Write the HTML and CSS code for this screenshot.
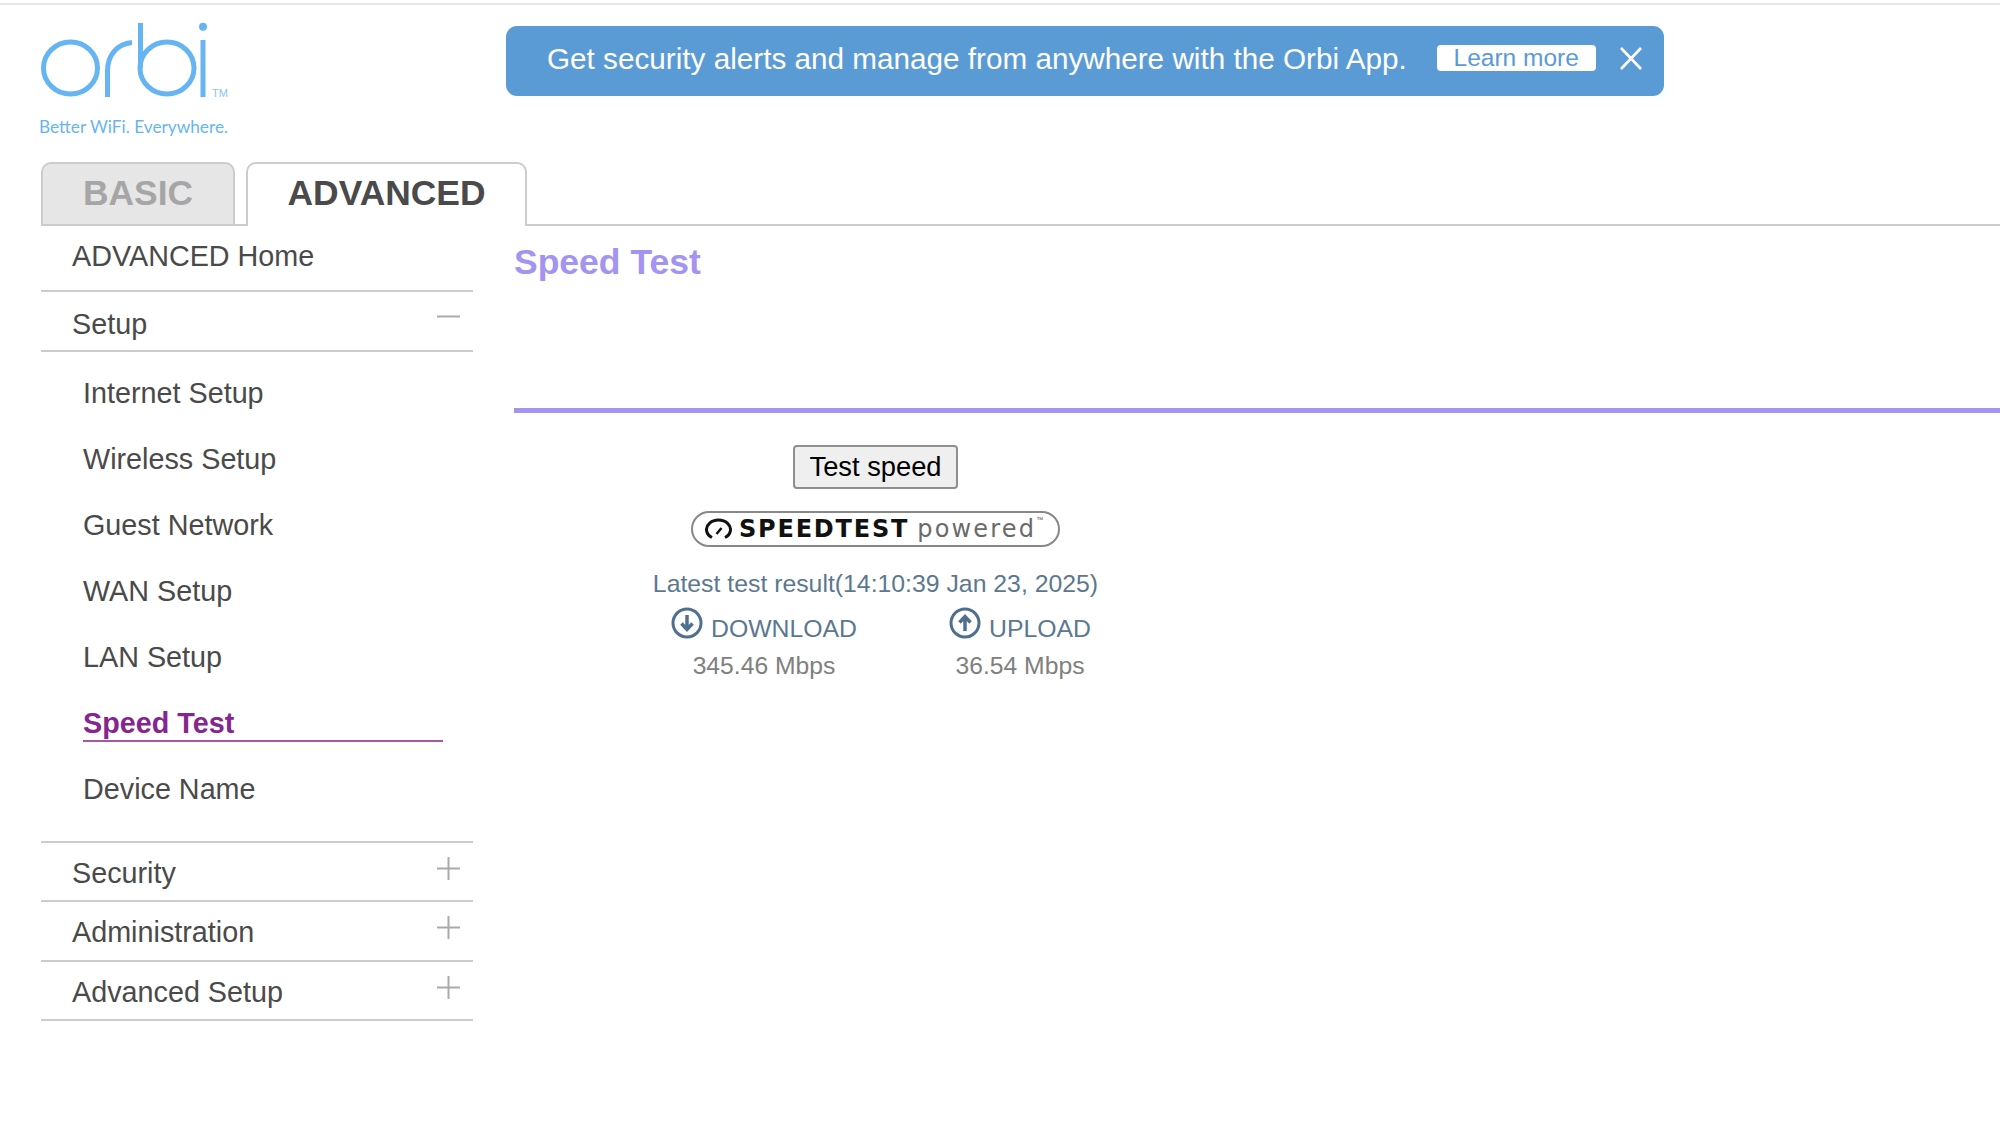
FILE: index.html
```html
<!DOCTYPE html>
<html lang="en">
<head>
<meta charset="utf-8">
<title>Orbi Speed Test</title>
<link rel="stylesheet" href="styles.css">
</head>
<body>
<div class="top-rule"></div>
<header class="header">
  <div class="brand">
    <svg class="logo" width="200" height="90" viewBox="0 0 200 90" aria-label="orbi logo">
      <g fill="none" stroke="#66b5f2" stroke-width="5">
        <ellipse cx="31.500" cy="51" rx="27" ry="26"/>
        <path d="M68.500 80V54C68.500 38 78 27 93 25.500"/>
        <ellipse cx="128" cy="51" rx="27" ry="26"/>
        <path d="M101.500 6V51"/>
        <path d="M164 23V80"/>
      </g>
      <circle cx="164" cy="9.700" r="4" fill="#66b5f2"/>
      <text class="logo-tm" x="173" y="80">TM</text>
    </svg>
    <div class="tagline">Better WiFi. Everywhere.</div>
  </div>
  <div class="banner">
    <span class="banner-text">Get security alerts and manage from anywhere with the Orbi App.</span>
    <a class="learn">Learn more</a>
    <svg class="banner-close" width="22" height="23" viewBox="0 0 22 23"><path d="M1 1L21 22M21 1L1 22" stroke="#fff" stroke-width="2.600" fill="none"/></svg>
  </div>
</header>
<nav class="tabs">
  <a class="tab tab-basic">BASIC</a>
  <a class="tab tab-advanced">ADVANCED</a>
</nav>
<div class="main">
  <aside class="sidebar">
    <div class="row row-home"><span class="row-label">ADVANCED Home</span></div>
    <div class="row row-setup"><span class="row-label">Setup</span>
      <svg class="toggle toggle-minus" width="23" height="23" viewBox="0 0 23 23"><path d="M0 11.500H23" stroke="#aaa" stroke-width="2"/></svg>
    </div>
    <ul class="submenu">
      <li><a>Internet Setup</a></li>
      <li><a>Wireless Setup</a></li>
      <li><a>Guest Network</a></li>
      <li><a>WAN Setup</a></li>
      <li><a>LAN Setup</a></li>
      <li><a class="active">Speed Test</a></li>
      <li><a>Device Name</a></li>
    </ul>
    <div class="row"><span class="row-label">Security</span>
      <svg class="toggle" width="23" height="23" viewBox="0 0 23 23"><path d="M0 11.500H23M11.500 0V23" stroke="#aaa" stroke-width="2"/></svg>
    </div>
    <div class="row"><span class="row-label">Administration</span>
      <svg class="toggle" width="23" height="23" viewBox="0 0 23 23"><path d="M0 11.500H23M11.500 0V23" stroke="#aaa" stroke-width="2"/></svg>
    </div>
    <div class="row"><span class="row-label">Advanced Setup</span>
      <svg class="toggle" width="23" height="23" viewBox="0 0 23 23"><path d="M0 11.500H23M11.500 0V23" stroke="#aaa" stroke-width="2"/></svg>
    </div>
  </aside>
  <main class="content">
    <h1 class="title">Speed Test</h1>
    <div class="panel">
      <button class="test-btn" type="button">Test speed</button>
      <div class="speedtest-badge">
        <svg width="27" height="24" viewBox="0 0 27 24"><path d="M7 20.500A12 9.500 0 1 1 20 20.500" fill="none" stroke="#111" stroke-width="3"/><path d="M11.500 17L16.500 11" stroke="#111" stroke-width="2.500"/></svg>
        <span class="st-name">SPEEDTEST</span>
        <span class="st-powered">powered</span><span class="st-tm">™</span>
      </div>
      <div class="latest">Latest test result(14:10:39 Jan 23, 2025)</div>
      <div class="results">
        <div class="result">
          <div class="result-head">
            <svg class="dir-icon" width="32" height="32" viewBox="0 0 32 32"><circle cx="16" cy="16" r="14" fill="none" stroke="#4f6f8f" stroke-width="3"/><path d="M16 8V22M10.500 16.500L16 22.500L21.500 16.500" fill="none" stroke="#4f6f8f" stroke-width="3.500"/></svg>
            <span>DOWNLOAD</span>
          </div>
          <div class="result-value">345.46 Mbps</div>
        </div>
        <div class="result">
          <div class="result-head">
            <svg class="dir-icon" width="32" height="32" viewBox="0 0 32 32"><circle cx="16" cy="16" r="14" fill="none" stroke="#4f6f8f" stroke-width="3"/><path d="M16 24V10M10.500 15.500L16 9.500L21.500 15.500" fill="none" stroke="#4f6f8f" stroke-width="3.500"/></svg>
            <span>UPLOAD</span>
          </div>
          <div class="result-value">36.54 Mbps</div>
        </div>
      </div>
    </div>
  </main>
</div>
</body>
</html>
```
FILE: styles.css
```css
* { box-sizing: border-box; }
html, body { margin: 0; padding: 0; background: #fff; }
body { width: 2000px; height: 1125px; overflow: hidden; font-family: "Liberation Sans", Arial, sans-serif; color: #4a4a4a; }
.top-rule { height: 5px; border-bottom: 2px solid #e6e6e6; }

.header { display: flex; height: 157px; padding-left: 39px; }
.brand { width: 467px; padding-top: 12px; }
.logo { display: block; }
.logo-tm { font-family: "Liberation Sans", sans-serif; font-size: 11px; fill: #8cc4ef; }
.tagline { margin-top: 9px; font-family: "Lato", sans-serif; font-size: 17.250px; line-height: 22px; color: #66b5f2; }

.banner { display: flex; align-items: center; width: 1158px; height: 70px; margin-top: 21px; padding: 0 0 4px 41px; background: #5b9bd5; border-radius: 11px; color: #fff; }
.banner-text { font-size: 29.700px; line-height: 40px; white-space: nowrap; }
.learn { display: block; width: 159px; height: 26px; margin: -2px 0 0 30px; background: #fff; border-radius: 4px; color: #5b9bd5; font-size: 24.500px; line-height: 25px; text-align: center; }
.banner-close { margin: -2px 0 0 24px; }

.tabs { display: flex; gap: 11px; height: 64px; margin-left: 41px; border-bottom: 2px solid #ccc; }
.tab { display: block; height: 64px; border: 2px solid #ccc; border-radius: 10px 10px 0 0; font-size: 35.400px; font-weight: 700; line-height: 58px; text-align: center; }
.tab-basic { width: 194px; background: #e6e6e6; color: #a6a6a6; }
.tab-advanced { width: 281px; background: #fff; border-bottom: 0; color: #4a4a4a; }

.main { display: flex; }
.sidebar { width: 432px; margin-left: 41px; font-size: 28.750px; }
.row { display: flex; justify-content: space-between; align-items: flex-start; height: 59.400px; padding: 0 13px 0 31px; border-bottom: 2px solid #ccc; }
.row-label { margin-top: 13px; line-height: 34px; }
.row-home { height: 66px; }
.row-setup { height: 60px; }
.row-setup .row-label { margin-top: 15px; }
.toggle { margin-top: 14px; }
.toggle-minus { margin-top: 13px; }
.submenu { list-style: none; margin: 0; padding: 8px 0 19px; border-bottom: 2px solid #ccc; }
.submenu li { height: 66px; padding: 16px 30px 0 42px; }
.submenu a { display: block; height: 36px; line-height: 34px; white-space: nowrap; }
.submenu a.active { border-bottom: 2px solid #a857a8; color: #85258f; font-weight: 700; }

.content { flex: 1; margin-left: 41px; }
.title { height: 187px; margin: 0; padding-top: 16px; border-bottom: 5px solid #a294f0; color: #a294f0; font-size: 35.500px; font-weight: 700; line-height: 40px; }
.panel { display: flex; flex-direction: column; align-items: center; width: 723px; padding-top: 32px; }
.test-btn { width: 165px; height: 44px; padding: 0; border: 2px solid #8f8f8f; border-radius: 4px; background: #efefef; color: #000; font-family: "Liberation Sans", sans-serif; font-size: 27.300px; }
.speedtest-badge { display: flex; align-items: center; width: 369px; height: 36px; margin-top: 22px; padding-left: 12px; border: 2px solid #888; border-radius: 18px; }
.st-name { margin-left: 7px; font-family: "DejaVu Sans", sans-serif; font-size: 24px; font-weight: 700; letter-spacing: 1.800px; color: #111; }
.st-powered { margin-left: 8px; font-family: "DejaVu Sans", sans-serif; font-size: 24px; letter-spacing: 2.200px; line-height: 30px; color: #6a6a6a; }
.st-tm { align-self: flex-start; font-size: 7px; line-height: 10px; margin-top: 2px; color: #555; }
.latest { margin-top: 22px; font-size: 24.800px; line-height: 30px; color: #5b7890; white-space: nowrap; }
.results { display: grid; grid-template-columns: 256px 256px; align-self: flex-start; margin: 5px 0 0 122px; }
.result { text-align: center; }
.result-head { display: flex; justify-content: center; align-items: flex-start; gap: 8px; height: 46px; font-size: 24.800px; line-height: 38px; color: #5b7890; }
.result-head span { padding-top: 6px; }
.dir-icon { display: block; flex: none; margin-top: 2.500px; }
.result-value { font-size: 24.700px; line-height: 31px; color: #808080; }
```
